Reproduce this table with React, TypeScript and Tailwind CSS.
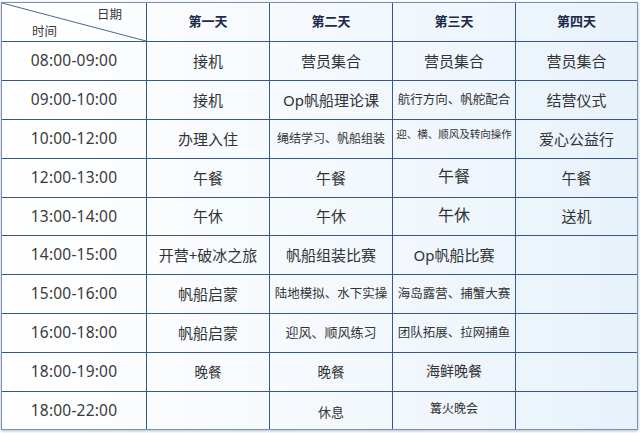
import React from 'react';

type Cell = { t: string; s?: string };

const rows: { time: string; days: Cell[] }[] = [
  { time: '08:00-09:00', days: [{ t: '接机' }, { t: '营员集合' }, { t: '营员集合' }, { t: '营员集合' }] },
  { time: '09:00-10:00', days: [{ t: '接机' }, { t: 'Op帆船理论课' }, { t: '航行方向、帆舵配合', s: 'text-[12.5px]' }, { t: '结营仪式' }] },
  { time: '10:00-12:00', days: [{ t: '办理入住' }, { t: '绳结学习、帆船组装', s: 'text-[12px]' }, { t: '迎、横、顺风及转向操作', s: 'text-[10.5px] -mt-2' }, { t: '爱心公益行' }] },
  { time: '12:00-13:00', days: [{ t: '午餐' }, { t: '午餐' }, { t: '午餐', s: '-mt-1' }, { t: '午餐' }] },
  { time: '13:00-14:00', days: [{ t: '午休' }, { t: '午休' }, { t: '午休', s: '-mt-1' }, { t: '送机' }] },
  { time: '14:00-15:00', days: [{ t: '开营+破冰之旅' }, { t: '帆船组装比赛' }, { t: 'Op帆船比赛' }, { t: '' }] },
  { time: '15:00-16:00', days: [{ t: '帆船启蒙' }, { t: '陆地模拟、水下实操', s: 'text-[12.5px]' }, { t: '海岛露营、捕蟹大赛', s: 'text-[12.5px]' }, { t: '' }] },
  { time: '16:00-18:00', days: [{ t: '帆船启蒙' }, { t: '迎风、顺风练习', s: 'text-[13px]' }, { t: '团队拓展、拉网捕鱼', s: 'text-[12.5px]' }, { t: '' }] },
  { time: '18:00-19:00', days: [{ t: '晚餐', s: 'text-[13.5px]' }, { t: '晚餐', s: 'text-[13.5px]' }, { t: '海鲜晚餐', s: 'text-[14px] -mt-1' }, { t: '' }] },
  { time: '18:00-22:00', days: [{ t: '' }, { t: '休息', s: 'text-[13px] mt-1' }, { t: '篝火晚会', s: 'text-[12px] -mt-1' }, { t: '' }] },
];

const heads = ['第一天', '第二天', '第三天', '第四天'];

export default function App() {
  return (
    <div
      className="w-[640px] h-[433px] bg-white pt-[2px] pl-[1px]"
      style={{ fontFamily: '"Noto Sans", "Noto Sans CJK SC", sans-serif' }}
    >
      <div className="grid w-[637px] grid-cols-[145px_123px_123px_123px_121px] grid-rows-[39px_39px_39px_39px_39px_38px_39px_39px_39px_39px_37px] border border-[#7b90ae] bg-gradient-to-r from-white via-[#f5f9fd] to-[#e8f2fb] shadow-[0_1px_3px_rgba(70,100,140,0.45)] text-[#333]">
        <div className="relative border-r border-b border-[#3a5884] text-[12.5px] text-[#3a3a3a]">
          <svg className="absolute inset-0 w-full h-full" viewBox="0 0 144 38" preserveAspectRatio="none">
            <line x1="0" y1="0" x2="144" y2="38" stroke="#4a6690" strokeWidth="1" />
          </svg>
          <span className="absolute left-[95px] top-[3px]">日期</span>
          <span className="absolute left-[30px] top-[20px]">时间</span>
        </div>
        {heads.map((h, i) => (
          <div
            key={h}
            className={`flex items-center justify-center border-b border-[#3a5884] text-[13px] font-bold text-[#1c2a48] ${i < 3 ? 'border-r' : ''}`}
          >
            {h}
          </div>
        ))}
        {rows.map((r, ri) => {
          const last = ri === rows.length - 1;
          return (
            <React.Fragment key={ri}>
              <div className={`flex items-center justify-center border-r border-[#3a5884] text-[15.5px] tracking-[0.2px] text-[#3a3a3a] ${last ? '' : 'border-b'}`}>
                {r.time}
              </div>
              {r.days.map((c, ci) => (
                <div
                  key={ci}
                  className={`flex items-center justify-center border-[#3a5884] ${ci < 3 ? 'border-r' : ''} ${last ? '' : 'border-b'}`}
                >
                  <span className={`whitespace-nowrap ${c.s ?? 'text-[15px]'}`}>{c.t}</span>
                </div>
              ))}
            </React.Fragment>
          );
        })}
      </div>
    </div>
  );
}
